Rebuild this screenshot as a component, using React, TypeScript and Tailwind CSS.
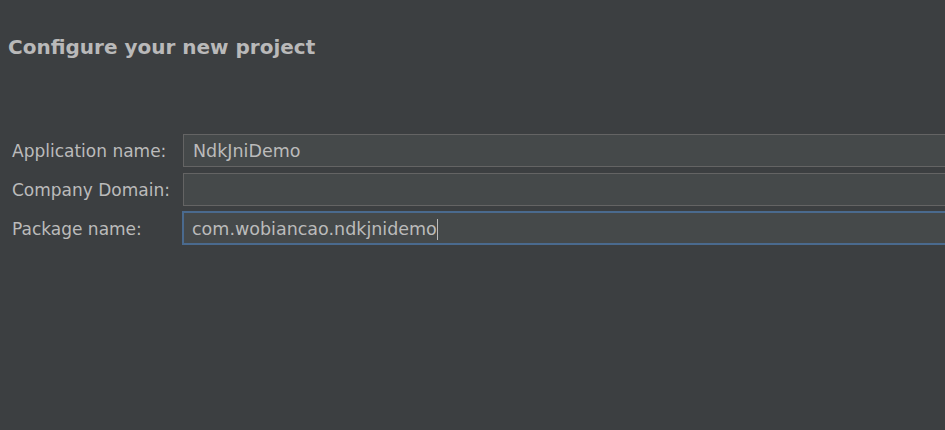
import React from 'react';

const fields = [
  { label: 'Application name:', value: 'NdkJniDemo', focused: false },
  { label: 'Company Domain:', value: '', focused: false },
  { label: 'Package name:', value: 'com.wobiancao.ndkjnidemo', focused: true },
];

const App = () => {
  return (
    <div
      className="w-[945px] h-[430px] overflow-hidden bg-[#3c3f41] text-[#bbbbbb]"
      style={{ fontFamily: '"DejaVu Sans", "Open Sans", sans-serif' }}
    >
      {/* Title */}
      <h1 className="pl-[8px] pt-[33px] text-[20px] leading-[28px] font-bold text-[#b9b9b9]">
        Configure your new project
      </h1>

      {/* Form */}
      <div className="mt-[73px] flex flex-col gap-[6px] w-[1000px]">
        {fields.map((f) => (
          <div key={f.label} className="flex items-center h-[33px]">
            <label className="w-[183px] shrink-0 pl-[12px] pt-[2px] text-[17px] text-[#bbbbbb]">
              {f.label}
            </label>
            <div
              className={
                f.focused
                  ? 'flex-1 h-[34px] -mt-[1px] flex items-center border-2 border-[#4a6a8e] bg-[#45494a] pl-[8px] pt-[2px] -ml-[1px]'
                  : 'flex-1 h-[33px] flex items-center border border-[#646464] bg-[#45494a] pl-[9px] pt-[2px]'
              }
            >
              <span className="text-[17.5px] text-[#bbbbbb]">{f.value}</span>
              {f.focused && <span className="w-px h-[21px] bg-[#bbbbbb]" />}
            </div>
          </div>
        ))}
      </div>
    </div>
  );
};

export default App;
